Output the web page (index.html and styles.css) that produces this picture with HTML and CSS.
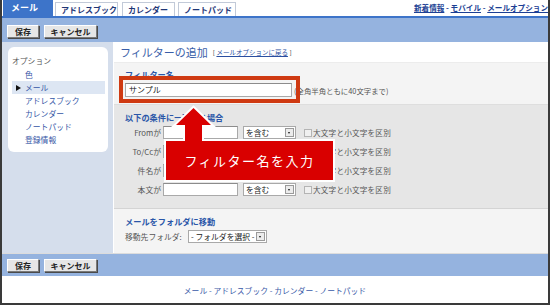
FILE: index.html
```html
<!DOCTYPE html>
<html lang="ja">
<head>
<meta charset="utf-8">
<link rel="stylesheet" href="styles.css">
</head>
<body>
<div class="page">
  <div class="topbar">
    <div class="tabs">
      <div class="tab active">メール</div>
      <div class="tab t2">アドレスブック</div>
      <div class="tab t3">カレンダー</div>
      <div class="tab t4">ノートパッド</div>
    </div>
    <div class="toplinks"><a>新着情報</a> - <a>モバイル</a> - <a>メールオプション</a></div>
  </div>
  <div class="toolbar">
    <span class="btn b1">保存</span><span class="btn b2">キャンセル</span>
  </div>
  <div class="content">
    <div class="sidebar">
      <div class="panel">
        <div class="ptitle">オプション</div>
        <ul class="menu">
          <li>色</li>
          <li class="sel"><span class="bullet"></span>メール</li>
          <li>アドレスブック</li>
          <li>カレンダー</li>
          <li>ノートパッド</li>
          <li>登録情報</li>
        </ul>
      </div>
    </div>
    <div class="main">
      <div class="hdr"><span class="title">フィルターの追加</span><span class="back">[ <a>メールオプションに戻る</a> ]</span></div>
      <div class="sec sec1">
        <div class="head">フィルター名</div>
        <div class="namerow"><span class="input name">サンプル</span><span class="note">(全角半角ともに40文字まで)</span></div>
      </div>
      <div class="sec sec2">
        <div class="head">以下の条件に一致する場合</div>
        <div class="row"><span class="lbl">Fromが</span><span class="input cond"></span><span class="select s1"><span class="stxt">を含む</span><span class="arr"></span></span><span class="chk"></span><span class="ctxt">大文字と小文字を区別</span></div>
        <div class="row"><span class="lbl">To/Ccが</span><span class="input cond"></span><span class="select s1"><span class="stxt">を含む</span><span class="arr"></span></span><span class="chk"></span><span class="ctxt">大文字と小文字を区別</span></div>
        <div class="row"><span class="lbl">件名が</span><span class="input cond"></span><span class="select s1"><span class="stxt">を含む</span><span class="arr"></span></span><span class="chk"></span><span class="ctxt">大文字と小文字を区別</span></div>
        <div class="row"><span class="lbl">本文が</span><span class="input cond"></span><span class="select s1"><span class="stxt">を含む</span><span class="arr"></span></span><span class="chk"></span><span class="ctxt">大文字と小文字を区別</span></div>
      </div>
      <div class="sec sec3">
        <div class="head">メールをフォルダに移動</div>
        <div class="frow"><span class="flbl">移動先フォルダ:</span><span class="select s2"><span class="stxt">- フォルダを選択 -</span><span class="arr"></span></span></div>
      </div>
    </div>
  </div>
  <div class="toolbar bottom">
    <span class="btn b1">保存</span><span class="btn b2">キャンセル</span>
  </div>
  <div class="footer"><a>メール</a> - <a>アドレスブック</a> - <a>カレンダー</a> - <a>ノートパッド</a></div>

  <div class="outline"></div>
  <svg class="callout" width="176" height="82" viewBox="0 0 176 82">
    <g fill="#ffffff" stroke="#ffffff" stroke-width="4" stroke-linejoin="miter">
      <polygon points="31.5,4 49,21 40,21 40,40 23,40 23,21 14,21"/>
      <rect x="4" y="37" width="167" height="39"/>
    </g>
    <g fill="#d90000">
      <polygon points="31.5,4 49,21 40,21 40,40 23,40 23,21 14,21"/>
      <rect x="4" y="37" width="167" height="39"/>
    </g>
  </svg>
  <div class="calltext">フィルター名を入力</div>
</div>
</body>
</html>
```

FILE: styles.css
```css
* { box-sizing: border-box; }
html, body { margin: 0; padding: 0; background: #ffffff; }
body { font-family: "Noto Sans CJK JP", "Noto Sans", sans-serif; }

.page {
  position: relative;
  width: 550px;
  height: 305px;
  border: 2px solid #3a3a3a;
  border-top: 0;
  display: flex;
  flex-direction: column;
  overflow: hidden;
}

.topbar {
  height: 16px;
  display: flex;
  justify-content: space-between;
  align-items: flex-end;
}
.tabs { display: flex; align-items: flex-end; padding-left: 1px; }
.tab {
  height: 14px;
  font-size: 8px;
  font-weight: bold;
  color: #1f3676;
  background: #ffffff;
  border: 1px solid #c2cad8;
  border-bottom: 0;
  line-height: 13px;
  padding-left: 5px;
}
.tab.active {
  height: 16px;
  width: 50px;
  background: #3d74c9;
  border: 0;
  color: #ffffff;
  font-size: 9px;
  line-height: 16px;
  padding-left: 8px;
}
.tab.t2 { width: 63px; margin-left: 2px; }
.tab.t3 { width: 53px; margin-left: 4px; }
.tab.t4 { width: 58px; margin-left: 3px; }

.toplinks {
  font-size: 7.6px;
  font-weight: bold;
  color: #1c3f94;
  line-height: 10px;
  padding-bottom: 3px;
  white-space: nowrap;
}
.toplinks a { text-decoration: underline; }

.toolbar {
  height: 26px;
  background: #95b3df;
  border-top: 2px solid #3d74c9;
  display: flex;
  align-items: flex-start;
  padding: 7px 0 0 5px;
}
.toolbar.bottom {
  height: 23px;
  border-top: 1px solid #dcdcdc;
  padding-top: 5px;
}
.btn {
  height: 13px;
  background: #e6e6e6;
  border: 1px solid;
  border-color: #ffffff #7a7a7a #7a7a7a #ffffff;
  box-shadow: 1px 1px 0 #4a4a4a;
  font-size: 8px;
  font-weight: bold;
  color: #222;
  line-height: 11px;
  text-align: center;
}
.btn.b1 { width: 32px; }
.btn.b2 { width: 53px; margin-left: 5px; }

.content {
  height: 211px;
  display: flex;
}
.sidebar {
  width: 111px;
  background: #d5deec;
  padding: 5px 5px 0 6px;
}
.panel {
  background: #ffffff;
  border-radius: 6px;
  height: 105px;
  padding: 8px 3px 0 4px;
}
.ptitle {
  font-size: 7.8px;
  color: #555;
  line-height: 12px;
}
.menu {
  list-style: none;
  margin: 1px 0 0 0;
  padding: 0;
}
.menu li {
  font-size: 7.8px;
  color: #3556a6;
  line-height: 13px;
  height: 13px;
  padding-left: 13px;
  position: relative;
}
.menu li.sel { background: #dde6f3; }
.bullet {
  position: absolute;
  left: 4px;
  top: 4px;
  width: 0;
  height: 0;
  border-left: 5px solid #111;
  border-top: 3px solid transparent;
  border-bottom: 3px solid transparent;
}

.main {
  flex: 1;
  display: flex;
  flex-direction: column;
  border-left: 1px solid #ffffff;
}
.hdr {
  height: 20px;
  background: #ffffff;
  padding-left: 6px;
  display: flex;
  align-items: center;
  white-space: nowrap;
}
.title {
  font-size: 11px;
  color: #3a5ea8;
}
.back {
  font-size: 6.5px;
  color: #333;
  margin-left: 5px;
}
.back a { color: #2a4ea0; text-decoration: underline; }

.sec { padding-left: 11px; }
.sec1 { height: 42px; background: #f4f4f4; border-top: 1px solid #ececec; padding-top: 5px; }
.sec2 { height: 104px; background: #e6e6e6; border-top: 1px solid #dedede; padding-top: 6px; }
.sec3 { flex: 1; background: #f4f4f4; border-top: 1px solid #d4d4d4; padding-top: 6px; }

.head {
  font-size: 8.2px;
  font-weight: bold;
  color: #2a56a8;
  line-height: 12px;
  height: 12px;
  white-space: nowrap;
}
.namerow {
  display: flex;
  align-items: center;
  margin-top: 3px;
  white-space: nowrap;
}
.input {
  display: inline-block;
  height: 14px;
  background: #ffffff;
  border: 1px solid #a9a9a9;
  border-top-color: #8c8c8c;
}
.input.name {
  width: 167px;
  font-size: 8px;
  color: #222;
  line-height: 12px;
  padding-left: 3px;
}
.note {
  font-size: 7.4px;
  color: #555;
  margin-left: 2px;
}

.row {
  height: 19px;
  display: flex;
  align-items: center;
  white-space: nowrap;
}
.sec2 .row:first-of-type { margin-top: 3px; }
.lbl {
  width: 38px;
  text-align: right;
  padding-right: 2px;
  font-size: 7.8px;
  color: #555;
}
.input.cond { width: 75px; height: 13px; }
.select {
  display: inline-flex;
  align-items: center;
  height: 13px;
  background: #ffffff;
  border: 1px solid #a9a9a9;
  position: relative;
}
.s1 { width: 53px; margin-left: 5px; }
.stxt {
  font-size: 7.8px;
  color: #222;
  padding-left: 2px;
  line-height: 11px;
  flex: 1;
}
.arr {
  width: 9px;
  height: 9px;
  margin-right: 1px;
  background: #ececec;
  border: 1px solid #9a9a9a;
  position: relative;
}
.arr::after {
  content: "";
  position: absolute;
  left: 2px;
  top: 3px;
  border-top: 2px solid #111;
  border-left: 1.5px solid transparent;
  border-right: 1.5px solid transparent;
}
.chk {
  width: 8px;
  height: 8px;
  margin-left: 8px;
  background: #f0f0f0;
  border: 1px solid #b4b4b4;
}
.ctxt {
  font-size: 7.6px;
  color: #555;
  margin-left: 1px;
  letter-spacing: 0.2px;
}

.frow {
  display: flex;
  align-items: center;
  margin-top: 3px;
  white-space: nowrap;
}
.flbl {
  font-size: 7.8px;
  color: #555;
  width: 63px;
}
.s2 { width: 79px; }

.footer {
  flex: 1;
  background: #ffffff;
  text-align: center;
  font-size: 7.8px;
  color: #3a5aa8;
  padding-top: 9px;
  white-space: nowrap;
}

.outline {
  position: absolute;
  left: 117px;
  top: 76px;
  width: 181px;
  height: 27px;
  border: 4px solid #cf3a12;
}
.callout {
  position: absolute;
  left: 160px;
  top: 104px;
}
.calltext {
  position: absolute;
  left: 164px;
  top: 141px;
  width: 167px;
  height: 39px;
  display: flex;
  align-items: center;
  justify-content: center;
  color: #ffffff;
  font-size: 13px;
  letter-spacing: 1.5px;
  white-space: nowrap;
}
```
